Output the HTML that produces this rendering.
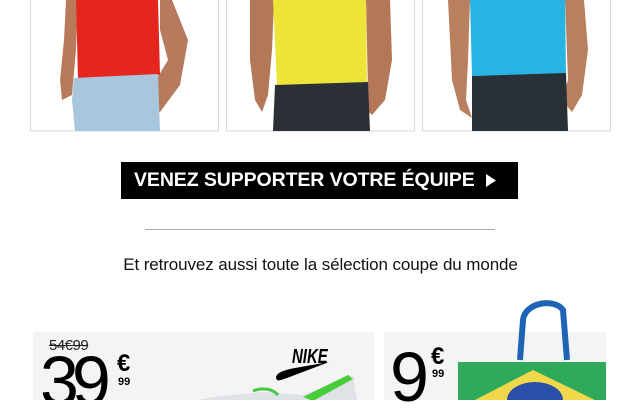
<!DOCTYPE html>
<html><head><meta charset="utf-8"><style>
body{margin:0;width:641px;height:400px;overflow:hidden;background:#fff;font-family:"Liberation Sans",sans-serif;position:relative}
.a{position:absolute}
</style></head><body>
<svg class="a" style="left:0;top:0" width="641" height="140">
<g>
<rect x="30.5" y="-2" width="188" height="133" fill="#fff" stroke="#d8d8d8"/>
<rect x="226.5" y="-2" width="188" height="133" fill="#fff" stroke="#d8d8d8"/>
<rect x="422.5" y="-2" width="188" height="133" fill="#fff" stroke="#d8d8d8"/>
</g>
<path d="M66 0 L78 0 L76 50 L72 95 L62 100 L60 80 L64 40Z" fill="#b87a5a"/>
<path d="M160 0 L172 0 L188 40 L180 85 L160 112 L145 110 L150 90 L168 60 L160 30Z" fill="#b77a5c"/>
<path d="M76 0 L158 0 L160 75 L78 80Z" fill="#e5261f"/>
<path d="M74 78 L158 74 L160 131 L75 131 L72 100Z" fill="#a9c6dc"/>
<path d="M250 0 L274 0 L272 50 L268 95 L262 112 L255 100 L250 60Z" fill="#b47757"/>
<path d="M366 0 L390 0 L392 60 L385 100 L372 115 L362 105 L368 90Z" fill="#b47757"/>
<path d="M273 0 L366 0 L367 82 L277 86Z" fill="#ede53a"/>
<path d="M275 85 L368 82 L370 131 L273 131Z" fill="#2b2f36"/>
<path d="M448 0 L470 0 L468 60 L466 100 L472 118 L460 110 L452 80Z" fill="#b8805f"/>
<path d="M565 0 L584 0 L588 50 L582 95 L572 112 L562 100 L568 80Z" fill="#b8805f"/>
<path d="M470 0 L565 0 L566 74 L472 76Z" fill="#27b4e2"/>
<path d="M472 76 L566 73 L568 131 L472 131Z" fill="#2a3038"/>
</svg>

<div class="a" style="left:121px;top:162px;width:397px;height:37px;background:#000;"></div>
<div class="a" style="left:134px;top:162px;color:#fff;font-weight:bold;font-size:19.5px;line-height:36px;letter-spacing:-0.1px;white-space:nowrap">VENEZ SUPPORTER VOTRE ÉQUIPE</div>
<svg class="a" style="left:486px;top:174px" width="12" height="13"><path d="M0 0 L10 6.5 L0 13Z" fill="#fff"/></svg>
<div class="a" style="left:145px;top:229px;width:350px;height:1px;background:#aaa"></div>
<div class="a" style="left:0;width:641px;top:255px;text-align:center;font-size:17px;color:#111;letter-spacing:-0.1px">Et retrouvez aussi toute la sélection coupe du monde</div>

<div class="a" style="left:33px;top:332px;width:341px;height:68px;background:#f4f4f4;overflow:hidden">
 <div class="a" style="left:16px;top:5px;font-size:15px;color:#222;text-decoration:line-through;letter-spacing:-0.5px">54€99</div>
 <div class="a" style="left:7px;top:14px;font-size:70px;letter-spacing:-7px;color:#000;line-height:70px">39</div>
 <div class="a" style="left:84px;top:20px;font-size:24px;line-height:24px;font-weight:bold">€</div>
 <div class="a" style="left:85px;top:44px;font-size:11px;font-weight:bold">99</div>
 <div class="a" style="left:253px;top:14px;font-size:20px;font-weight:bold;font-style:italic;transform:scaleX(0.75)">NIKE</div>
 <svg class="a" style="left:240px;top:30px" width="60" height="22"><path d="M4 18 C0 12 10 8 22 6 L56 0 L14 16 C8 18 6 19 4 18Z" fill="#000"/></svg>
 <svg class="a" style="left:120px;top:35px" width="210" height="40"><path d="M10 40 L60 30 L110 25 L150 28 L190 12 L200 8 L205 40Z" fill="#dfe2e6"/><path d="M150 30 L195 8 L200 12 L160 34Z" fill="#47cc3a"/><path d="M100 24 C110 20 120 22 125 28" stroke="#4c4" stroke-width="3" fill="none"/></svg>
</div>
<div class="a" style="left:384px;top:332px;width:222px;height:68px;background:#f4f4f4"></div>
<div class="a" style="left:390px;top:342px;font-size:70px;line-height:70px;color:#000">9</div>
<div class="a" style="left:431px;top:345px;font-size:24px;line-height:24px;font-weight:bold">€</div>
<div class="a" style="left:432px;top:368px;font-size:11px;font-weight:bold">99</div>
<svg class="a" style="left:455px;top:300px" width="155" height="100">
<path d="M65 60 L68 20 C70 2 100 -2 108 10 L112 60" stroke="#1e64b4" stroke-width="6" fill="none"/>
<rect x="3" y="62" width="148" height="40" fill="#2faa5a"/>
<path d="M20 100 L78 70 L140 100Z" fill="#f0d84a"/>
<ellipse cx="80" cy="100" rx="28" ry="18" fill="#2a4fa8"/>
</svg>
</body></html>
